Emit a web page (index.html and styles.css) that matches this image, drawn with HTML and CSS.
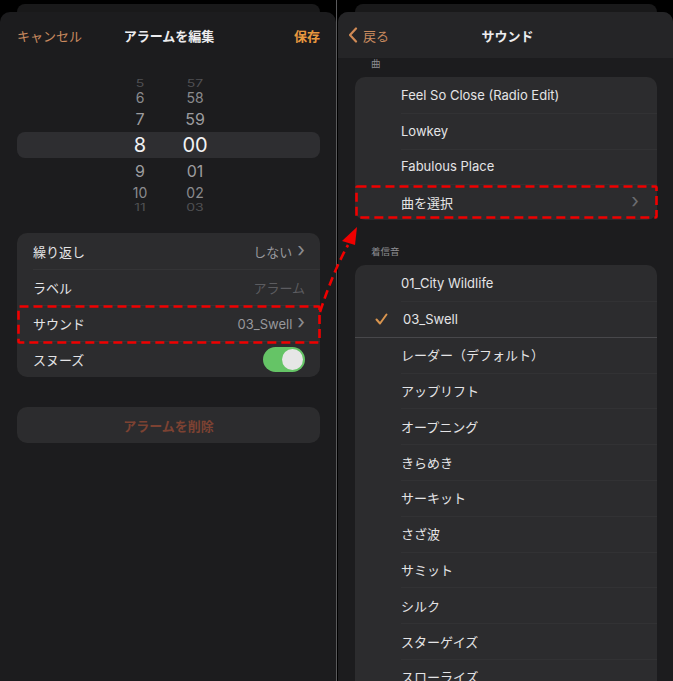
FILE: index.html
```html
<!DOCTYPE html>
<html lang="ja">
<head>
    <meta charset="UTF-8">
    <meta name="viewport" content="width=device-width, initial-scale=1.0">
    <title>アラームを編集 / サウンド</title>
    <link rel="stylesheet" href="styles.css">
</head>
<body>
    <div class="screens">
        <!-- Left: edit alarm -->
        <section class="panel panel-left">
            <div class="peek"></div>
            <div class="sheet">
                <header class="nav">
                    <span class="nav-link">キャンセル</span>
                    <span class="nav-title">アラームを編集</span>
                    <span class="nav-link strong">保存</span>
                </header>

                <div class="picker">
                    <div class="pick-row far top"><span>5</span><span>57</span></div>
                    <div class="pick-row near2"><span>6</span><span>58</span></div>
                    <div class="pick-row near1"><span>7</span><span>59</span></div>
                    <div class="pick-row selected"><span>8</span><span>00</span></div>
                    <div class="pick-row near1"><span>9</span><span>01</span></div>
                    <div class="pick-row near2"><span>10</span><span>02</span></div>
                    <div class="pick-row far bottom"><span>11</span><span>03</span></div>
                </div>

                <div class="group settings">
                    <div class="cell">
                        <span class="cell-label">繰り返し</span>
                        <span class="cell-value">しない <span class="chev">&#x203A;</span></span>
                    </div>
                    <div class="cell">
                        <span class="cell-label">ラベル</span>
                        <span class="cell-value dim">アラーム</span>
                    </div>
                    <div class="cell">
                        <span class="cell-label">サウンド</span>
                        <span class="cell-value">03_Swell <span class="chev">&#x203A;</span></span>
                    </div>
                    <div class="cell">
                        <span class="cell-label">スヌーズ</span>
                        <span class="toggle"><span class="knob"></span></span>
                    </div>
                </div>

                <div class="group delete-btn">アラームを削除</div>
            </div>
        </section>

        <div class="divider"></div>

        <!-- Right: sound list -->
        <section class="panel panel-right">
            <div class="peek"></div>
            <div class="sheet">
                <header class="nav nav-bar">
                    <span class="nav-link back">
                        <svg width="10" height="16" viewBox="0 0 10 16"><path d="M8 1.5 L2 8 L8 14.5" fill="none" stroke="#d08a55" stroke-width="2.2" stroke-linecap="round" stroke-linejoin="round"/></svg>
                        戻る
                    </span>
                    <span class="nav-title">サウンド</span>
                    <span class="nav-link placeholder"></span>
                </header>

                <div class="section-label first">曲</div>
                <div class="group list">
                    <div class="item"><span class="item-text">Feel So Close (Radio Edit)</span></div>
                    <div class="item"><span class="item-text">Lowkey</span></div>
                    <div class="item"><span class="item-text">Fabulous Place</span></div>
                    <div class="item"><span class="item-text">曲を選択</span><span class="chev gray">&#x203A;</span></div>
                </div>

                <div class="section-label">着信音</div>
                <div class="group list" id="ringtones"></div>
            </div>
        </section>
    </div>

    <!-- annotation overlay -->
    <svg class="marks" width="673" height="681" viewBox="0 0 673 681">
        <g fill="none" stroke="#f00000" stroke-width="2.6" stroke-dasharray="9 5">
            <rect x="18.5" y="306.5" width="301" height="36" rx="1"/>
            <rect x="356.5" y="186.5" width="300" height="31" rx="1"/>
            <path d="M320 312 Q333 272 348 245"/>
        </g>
        <polygon points="357,227 342,241 355,245" fill="#f00000"/>
    </svg>

    <script>
        const ringtones = [
            "01_City Wildlife", "03_Swell", "レーダー（デフォルト）", "アップリフト",
            "オープニング", "きらめき", "サーキット", "さざ波",
            "サミット", "シルク", "スターゲイズ", "スローライズ"
        ];
        const selected = "03_Swell";

        const list = document.getElementById("ringtones");
        ringtones.forEach(name => {
            const row = document.createElement("div");
            row.className = "item" + (name === selected ? " checked" : "");
            row.innerHTML = (name === selected
                ? `<svg class="check" width="13" height="12" viewBox="0 0 13 12"><path d="M1.5 6.5 L5 10.5 L11.5 1.5" fill="none" stroke="#d9954f" stroke-width="2" stroke-linecap="round" stroke-linejoin="round"/></svg>`
                : "") + `<span class="item-text">${name}</span>`;
            list.appendChild(row);
        });
    </script>
</body>
</html>
```

FILE: styles.css
```css
body {
    margin: 0;
    background: #000;
    font-family: Inter, "Noto Sans CJK JP", sans-serif;
    font-size: 13px;
    color: #e4e4e6;
    overflow: hidden;
}
.screens {
    display: flex;
    width: 673px;
    height: 681px;
    overflow: hidden;
}
.panel {
    display: flex;
    flex-direction: column;
    padding-top: 4px;
    box-sizing: border-box;
}
.panel-left {
    width: 336px;
}
.panel-right {
    flex: 1;
    padding-left: 1px;
}
.divider {
    width: 1px;
    background: #5a5a5c;
}
.peek {
    height: 8px;
    margin: 0 16px 0 17px;
    border-radius: 8px 8px 0 0;
    background: #19191a;
}
.sheet {
    flex: 1;
    background: #1c1c1e;
    border-radius: 10px 10px 0 0;
    overflow: hidden;
}

/* nav header */
.nav {
    height: 46px;
    display: flex;
    align-items: center;
    justify-content: space-between;
    padding: 0 16px 0 17px;
}
.nav-title {
    font-weight: 700;
    color: #ececee;
}
.nav-link {
    color: #c98a5e;
    min-width: 64px;
}
.nav-link.strong {
    color: #e8983f;
    font-weight: 700;
    text-align: right;
}
.nav-bar {
    background: #252527;
    padding: 0 16px 0 10px;
}
.back {
    display: flex;
    align-items: center;
    gap: 5px;
}
.placeholder {
    min-width: 54px;
}

/* time picker */
.picker {
    margin: 14px 16px 0 17px;
}
.pick-row {
    display: grid;
    grid-template-columns: 40px 40px;
    column-gap: 15px;
    padding-left: 103px;
    align-items: center;
    text-align: center;
}
.pick-row.far {
    height: 17px;
    color: #505053;
    font-size: 14px;
}
.pick-row.far span {
    transform: scaleY(0.7);
}
.pick-row.top span {
    transform-origin: bottom;
}
.pick-row.bottom span {
    transform-origin: top;
}
.pick-row.near2 {
    height: 17px;
    font-size: 14px;
    color: #8b8b8e;
}
.pick-row.near1 {
    height: 26px;
    font-size: 16px;
    color: #9c9c9f;
}
.pick-row.selected {
    height: 26px;
    font-size: 20px;
    color: #f2f2f4;
    background: #2e2e31;
    border-radius: 8px;
}

/* grouped cards */
.group {
    margin: 0 16px 0 17px;
    background: #2c2c2e;
    border-radius: 10px;
}
.settings {
    margin-top: 15px;
}
.cell {
    height: 36px;
    display: flex;
    align-items: center;
    justify-content: space-between;
    margin-left: 16px;
    padding-right: 15px;
    border-top: 1px solid #343436;
    box-sizing: border-box;
}
.cell:first-child {
    border-top: none;
}
.cell-value {
    color: #98989c;
    display: flex;
    align-items: center;
    gap: 5px;
}
.cell-value.dim {
    color: #5c5c60;
}
.chev {
    font-size: 20px;
    line-height: 1;
    margin-top: -3px;
    color: #8c8c90;
}
.chev.gray {
    color: #6c6c70;
}
.toggle {
    width: 42px;
    height: 25px;
    border-radius: 13px;
    background: #65c466;
    display: flex;
    align-items: center;
    justify-content: flex-end;
    padding: 0 2px;
    box-sizing: border-box;
}
.knob {
    width: 21px;
    height: 21px;
    border-radius: 50%;
    background: #e6e6e6;
}
.delete-btn {
    margin-top: 30px;
    height: 36px;
    display: flex;
    align-items: center;
    justify-content: center;
    color: #7d4232;
    font-weight: 700;
}

/* sound list */
.section-label {
    font-size: 9.5px;
    color: #8e8e93;
    padding-left: 33px;
    height: 45px;
    display: flex;
    align-items: flex-end;
    padding-bottom: 7px;
    box-sizing: border-box;
}
.section-label.first {
    height: 19px;
}
.list .item {
    height: 35.8px;
    display: flex;
    align-items: center;
    position: relative;
    padding-left: 46px;
    padding-right: 18px;
    box-sizing: border-box;
    justify-content: space-between;
}
.list .item + .item::before {
    content: "";
    position: absolute;
    top: 0;
    left: 46px;
    right: 0;
    border-top: 1px solid #323234;
}
.list .checked + .item::before {
    left: 0;
    border-top-color: #48484b;
}
.check {
    position: absolute;
    left: 20px;
    top: 12px;
}
.checked .item-text {
    margin-left: 2px;
}

.marks {
    position: absolute;
    left: 0;
    top: 0;
    pointer-events: none;
}
```
